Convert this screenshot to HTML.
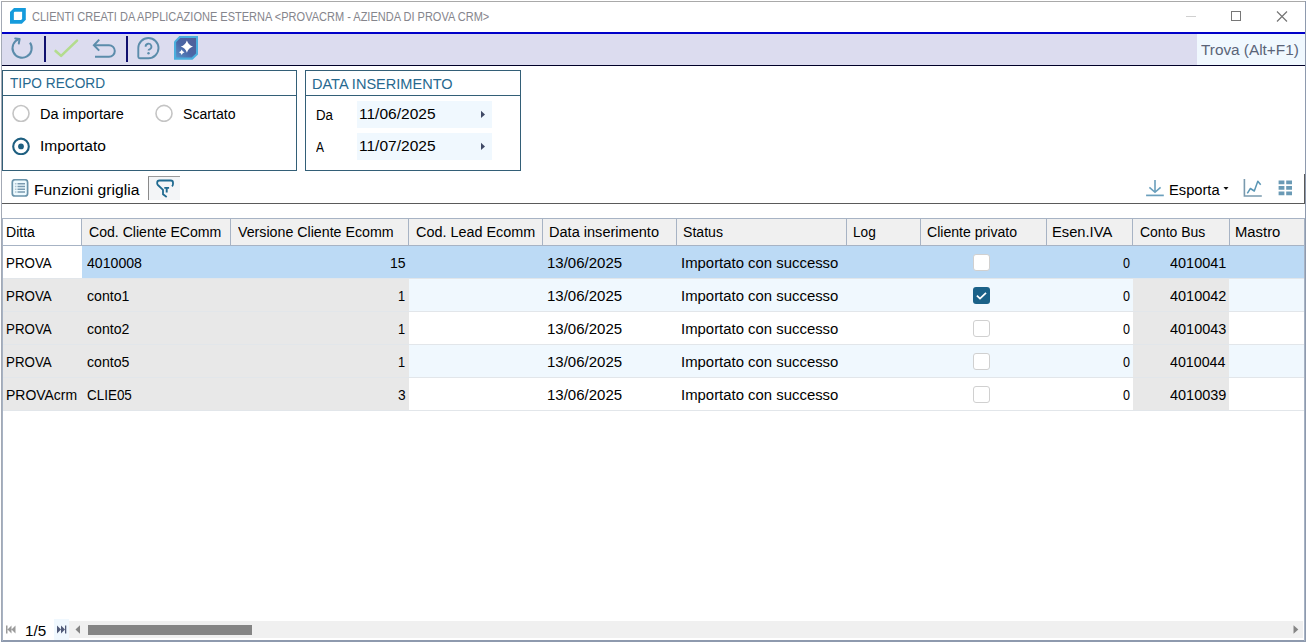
<!DOCTYPE html>
<html><head><meta charset="utf-8">
<style>
*{margin:0;padding:0;box-sizing:border-box}
html,body{width:1307px;height:642px;overflow:hidden;background:#fff;font-family:"Liberation Sans",sans-serif;color:#000}
.a{position:absolute}
.t{position:absolute;white-space:nowrap;line-height:1;transform-origin:0 0}
</style></head><body>
<!-- window border -->
<div class="a" style="left:1px;top:1px;width:1305px;height:1px;background:#a9a9a9"></div>
<div class="a" style="left:1px;top:1px;width:1px;height:641px;background:#a3a9b5"></div>
<div class="a" style="left:1305px;top:1px;width:1px;height:641px;background:#8e9aae"></div>
<div class="a" style="left:1px;top:640px;width:1305px;height:2px;background:#8e9aae"></div>

<!-- title bar -->
<svg class="a" style="left:10px;top:8px" width="17" height="17" viewBox="0 0 17 17">
  <path d="M4 0H15.8V11.7L11.8 15.7H0V4Z" fill="#159bdc"/>
  <path d="M5 3.85H12.1V10.9L11 12H3.85V5Q3.85 3.85 5 3.85Z" fill="#fff"/>
</svg>
<div class="a" style="left:1186px;top:16px;width:10px;height:1px;background:#d0d0d0"></div>
<div class="a" style="left:1231px;top:11px;width:10px;height:10px;border:1px solid #777"></div>
<svg class="a" style="left:1276px;top:11px" width="12" height="11" viewBox="0 0 12 11"><path d="M1 0.5L11 10.5M11 0.5L1 10.5" stroke="#747474" stroke-width="1.15"/></svg>

<!-- toolbar -->
<div class="a" style="left:2px;top:32px;width:1303px;height:2px;background:#0000c8"></div>
<div class="a" style="left:2px;top:34px;width:1303px;height:31px;background:#dcdcef"></div>
<div class="a" style="left:1197px;top:34px;width:108px;height:31px;background:#f0f8fe"></div>
<div class="a" style="left:2px;top:65px;width:1303px;height:1px;background:#000028"></div>
<svg class="a" style="left:10px;top:36px" width="26" height="26" viewBox="0 0 26 26">
  <path d="M20 6.6A9.6 9.6 0 1 1 8.7 3.1" fill="none" stroke="#5b8cab" stroke-width="2"/>
  <path d="M5.2 2.4L9.6 3L8.8 7.5" fill="none" stroke="#5b8cab" stroke-width="2" stroke-linejoin="round" stroke-linecap="round"/>
</svg>
<div class="a" style="left:44px;top:36px;width:2px;height:26px;background:#10106e"></div>
<svg class="a" style="left:50px;top:36px" width="32" height="26" viewBox="0 0 32 26">
  <path d="M5.6 15L11.1 19.9L27 4.6" fill="none" stroke="#b3dc8e" stroke-width="2.6" stroke-linecap="round" stroke-linejoin="round"/>
</svg>
<svg class="a" style="left:90px;top:36px" width="30" height="26" viewBox="0 0 30 26">
  <path d="M4 9.2H19A5.8 5.8 0 0 1 19 20.8H5" fill="none" stroke="#5b8cab" stroke-width="2"/>
  <path d="M9.2 3.6L3.9 9.2L9.2 14.6" fill="none" stroke="#5b8cab" stroke-width="2"/>
</svg>
<div class="a" style="left:126px;top:36px;width:2px;height:26px;background:#10106e"></div>
<svg class="a" style="left:134px;top:34px" width="30" height="30" viewBox="0 0 30 30">
  <path d="M4.3 14.1A10.1 10.1 0 1 1 14.4 24.2H5.8Q4.3 24.2 4.3 22.7Z" fill="none" stroke="#5b8cab" stroke-width="1.9"/>
  <path d="M11.6 12.7A2.9 2.9 0 1 1 15.6 15.3C14.8 15.6 14.5 16 14.5 16.6" fill="none" stroke="#5b8cab" stroke-width="1.8"/>
  <circle cx="14.5" cy="19.2" r="1.2" fill="#5b8cab"/>
</svg>
<svg class="a" style="left:174px;top:36px" width="24" height="24" viewBox="0 0 24 24">
  <defs><linearGradient id="g1" x1="0" y1="1" x2="1" y2="0"><stop offset="0" stop-color="#5a92c8"/><stop offset="0.45" stop-color="#4a66a6"/><stop offset="1" stop-color="#535e96"/></linearGradient></defs>
  <path d="M5.4 0H24.1V18.3L18.5 23.7H0V5.5Z" fill="#4aaedd"/>
  <path d="M6.2 2H22V17.5L17.6 21.6H2.1V6.3Z" fill="url(#g1)"/>
  <path d="M12.9 4.5Q14.4 9.1 19 10.6Q14.4 12.1 12.9 16.7Q11.4 12.1 6.8 10.6Q11.4 9.1 12.9 4.5Z" fill="#fff"/>
  <path d="M7.7 13.4Q8.4 15.5 10.5 16.2Q8.4 16.9 7.7 19Q7 16.9 4.9 16.2Q7 15.5 7.7 13.4Z" fill="#fff"/>
</svg>

<!-- TIPO RECORD box -->
<div class="a" style="left:2px;top:70px;width:295px;height:101px;border:1px solid #335f77"></div>
<div class="a" style="left:3px;top:95px;width:293px;height:1px;background:#335f77"></div>
<svg class="a" style="left:12px;top:104px" width="18" height="18" viewBox="0 0 18 18"><circle cx="9" cy="9.5" r="8" fill="#fff" stroke="#c4c4c4" stroke-width="1.6"/></svg>
<svg class="a" style="left:155px;top:104px" width="18" height="18" viewBox="0 0 18 18"><circle cx="9" cy="9.4" r="8" fill="#fff" stroke="#c4c4c4" stroke-width="1.6"/></svg>
<svg class="a" style="left:12px;top:137px" width="18" height="18" viewBox="0 0 18 18"><circle cx="9" cy="9.4" r="7.8" fill="#fff" stroke="#1e5f80" stroke-width="2.1"/><circle cx="9" cy="9.4" r="2.9" fill="#1e5f80"/></svg>

<!-- DATA box -->
<div class="a" style="left:305px;top:70px;width:216px;height:101px;border:1px solid #335f77"></div>
<div class="a" style="left:306px;top:95px;width:214px;height:1px;background:#335f77"></div>
<div class="a" style="left:357px;top:101px;width:135px;height:27px;background:#f0f8fe"></div>
<div class="a" style="left:357px;top:133px;width:135px;height:27px;background:#f0f8fe"></div>
<svg class="a" style="left:480px;top:110px" width="6" height="9" viewBox="0 0 6 9"><path d="M1 0.7L5 4.6L1 8.1Z" fill="#404a66"/></svg>
<svg class="a" style="left:480px;top:142px" width="6" height="9" viewBox="0 0 6 9"><path d="M1 0.7L5 4.6L1 8.1Z" fill="#404a66"/></svg>

<!-- grid toolbar -->
<svg class="a" style="left:11px;top:179px" width="18" height="18" viewBox="0 0 18 18">
  <rect x="1.3" y="0.7" width="15.3" height="16.3" rx="2.6" fill="#eefaff" stroke="#6a93aa" stroke-width="1.7"/>
  <path d="M6.5 4.8H14M6.5 7.6H14M6.5 10.3H14M6.5 13H14" stroke="#7a9ab0" stroke-width="1.5"/>
  <path d="M3.9 4.8H5.5M3.9 7.6H5.5M3.9 10.3H5.5M3.9 13H5.5" stroke="#b0c4d0" stroke-width="1.5"/>
</svg>
<div class="a" style="left:148px;top:176px;width:32px;height:24px;background:#f3f5f7;border-left:1px solid #8a8a8a;border-top:1px solid #9a9a9a"></div>
<svg class="a" style="left:148px;top:176px" width="32" height="24" viewBox="0 0 32 24">
  <path d="M24 10.3Q25 9.3 25 8V6.8Q25 4.5 22.8 4.5H11.5Q9.2 4.5 9.2 6.8V7.5Q9.2 8.3 9.9 9L15 13.8V18.3L18.7 20.9" fill="none" stroke="#1f6a90" stroke-width="1.8"/>
  <path d="M16.3 11.9H21.1M18.7 11.9V16.4" fill="none" stroke="#1f6a90" stroke-width="1.9"/>
</svg>
<div class="a" style="left:2px;top:203px;width:1303px;height:1px;background:#5a5a5a"></div>
<div class="a" style="left:1304px;top:174px;width:1px;height:30px;background:#5a5a5a"></div>
<svg class="a" style="left:1145px;top:179px" width="20" height="18" viewBox="0 0 20 18">
  <path d="M10 1.1V13.3M4.4 8.3L10 13.3L15.6 8.3" fill="none" stroke="#6a9fbc" stroke-width="1.6"/>
  <path d="M1.1 16.4H18.8" stroke="#6a9fbc" stroke-width="1.7"/>
</svg>
<svg class="a" style="left:1223px;top:186px" width="6" height="5" viewBox="0 0 6 5"><path d="M0.5 1H5.5L3 4Z" fill="#111"/></svg>
<svg class="a" style="left:1243px;top:178px" width="20" height="20" viewBox="0 0 20 20">
  <path d="M1.4 1V18H18.8" fill="none" stroke="#7a9aae" stroke-width="1.6"/>
  <path d="M4.3 15.3L7.4 10.5L11.3 13L14.8 3.2L17.7 6.8" fill="none" stroke="#5a96b5" stroke-width="1.5" stroke-linejoin="round"/>
</svg>
<svg class="a" style="left:1278px;top:180px" width="15" height="16" viewBox="0 0 15 16">
  <path d="M0.6 0.5h5.8v3.8h-5.8zM8.2 0.5h5.8v3.8h-5.8zM0.6 6h5.8v3.8h-5.8zM8.2 6h5.8v3.8h-5.8zM0.6 11.5h5.8v3.8h-5.8zM8.2 11.5h5.8v3.8h-5.8z" fill="#6a9ab5"/>
</svg>

<!-- grid -->
<div class="a" style="left:2px;top:218px;width:1303px;height:28px;background:#f0f0f0;border-top:1px solid #a7b3c4;border-bottom:1px solid #a7b3c4"></div>
<div class="a" style="left:2px;top:219px;width:80px;height:26px;background:#fff"></div>
<div class="a" style="left:2px;top:218px;width:1px;height:423px;background:#a7b3c4"></div>
<div class="a" style="left:1304px;top:218px;width:1px;height:423px;background:#a7b3c4"></div>
<!-- header separators -->
<div class="a" style="left:81px;top:219px;width:1px;height:26px;background:#a7b3c4"></div>
<div class="a" style="left:230px;top:219px;width:1px;height:26px;background:#a7b3c4"></div>
<div class="a" style="left:408px;top:219px;width:1px;height:26px;background:#a7b3c4"></div>
<div class="a" style="left:542px;top:219px;width:1px;height:26px;background:#a7b3c4"></div>
<div class="a" style="left:676px;top:219px;width:1px;height:26px;background:#a7b3c4"></div>
<div class="a" style="left:846px;top:219px;width:1px;height:26px;background:#a7b3c4"></div>
<div class="a" style="left:920px;top:219px;width:1px;height:26px;background:#a7b3c4"></div>
<div class="a" style="left:1046px;top:219px;width:1px;height:26px;background:#a7b3c4"></div>
<div class="a" style="left:1132px;top:219px;width:1px;height:26px;background:#a7b3c4"></div>
<div class="a" style="left:1229px;top:219px;width:1px;height:26px;background:#a7b3c4"></div>
<div class="a" style="left:1304px;top:219px;width:1px;height:26px;background:#a7b3c4"></div>

<!-- rows -->
<div class="a" style="left:82px;top:246px;width:1222px;height:32px;background:#bcdaf5"></div>
<div class="a" style="left:3px;top:278px;width:1301px;height:1px;background:#e2e6ea"></div>
<div class="a" style="left:409px;top:279px;width:895px;height:32px;background:#f0f8fe"></div>
<div class="a" style="left:3px;top:279px;width:406px;height:32px;background:#e8e8e8"></div>
<div class="a" style="left:3px;top:311px;width:1301px;height:1px;background:#e2e6ea"></div>
<div class="a" style="left:3px;top:312px;width:406px;height:32px;background:#e8e8e8"></div>
<div class="a" style="left:3px;top:344px;width:1301px;height:1px;background:#e2e6ea"></div>
<div class="a" style="left:409px;top:345px;width:895px;height:32px;background:#f0f8fe"></div>
<div class="a" style="left:3px;top:345px;width:406px;height:32px;background:#e8e8e8"></div>
<div class="a" style="left:3px;top:377px;width:1301px;height:1px;background:#e2e6ea"></div>
<div class="a" style="left:3px;top:378px;width:406px;height:32px;background:#e8e8e8"></div>
<div class="a" style="left:3px;top:410px;width:1301px;height:1px;background:#e2e6ea"></div>
<div class="a" style="left:1133px;top:279px;width:96px;height:32px;background:#e8e8e8"></div>
<div class="a" style="left:1133px;top:312px;width:96px;height:32px;background:#e8e8e8"></div>
<div class="a" style="left:1133px;top:345px;width:96px;height:32px;background:#e8e8e8"></div>
<div class="a" style="left:1133px;top:378px;width:96px;height:32px;background:#e8e8e8"></div>
<!-- checkboxes -->
<div class="a" style="left:973px;top:254px;width:17px;height:17px;border:1.7px solid #d0d0d0;border-radius:3px;background:#fff"></div>
<div class="a" style="left:973px;top:287px;width:17px;height:17px;border-radius:3px;background:#1a6188"></div>
<svg class="a" style="left:973px;top:287px" width="17" height="17" viewBox="0 0 17 17"><path d="M3.9 8.7L7 11.6L13 5.9" fill="none" stroke="#fff" stroke-width="1.8"/></svg>
<div class="a" style="left:973px;top:320px;width:17px;height:17px;border:1.7px solid #d0d0d0;border-radius:3px;background:#fff"></div>
<div class="a" style="left:973px;top:353px;width:17px;height:17px;border:1.7px solid #d0d0d0;border-radius:3px;background:#fff"></div>
<div class="a" style="left:973px;top:386px;width:17px;height:17px;border:1.7px solid #d0d0d0;border-radius:3px;background:#fff"></div>

<!-- footer -->
<svg class="a" style="left:6px;top:625px" width="10" height="9" viewBox="0 0 10 9"><path d="M0 0.5H1.5V8.5H0ZM5.5 0.5V8.5L1.5 4.5ZM9.5 0.5V8.5L5.5 4.5Z" fill="#9a9a9a"/></svg>
<div class="a" style="left:54px;top:619px;width:15px;height:21px;background:#f0f8fe"></div>
<svg class="a" style="left:57px;top:625px" width="10" height="9" viewBox="0 0 10 9"><path d="M0 0.5L4 4.5L0 8.5ZM4 0.5L8 4.5L4 8.5ZM8 0.5H9.3V8.5H8Z" fill="#505a78"/></svg>
<div class="a" style="left:69px;top:621px;width:1234px;height:17px;background:#f0f0f0"></div>
<svg class="a" style="left:75px;top:625px" width="6" height="9" viewBox="0 0 6 9"><path d="M5 0.3V8.7L0.5 4.5Z" fill="#858585"/></svg>
<div class="a" style="left:88px;top:625px;width:164px;height:10px;background:#858585"></div>
<svg class="a" style="left:1293px;top:625px" width="6" height="9" viewBox="0 0 6 9"><path d="M0.5 0.3V8.7L5.3 4.5Z" fill="#858585"/></svg>

<div class="t" style="left:31.70px;top:9.75px;font-size:13.4px;color:#85858c;transform:scaleX(0.8227)">CLIENTI CREATI DA APPLICAZIONE ESTERNA &lt;PROVACRM - AZIENDA DI PROVA CRM&gt;</div>
<div class="t" style="left:1200.50px;top:41.58px;font-size:15.5px;color:#5a6478;transform:scaleX(0.9889)">Trova (Alt+F1)</div>
<div class="t" style="left:9.50px;top:75.48px;font-size:15.5px;color:#27698f;transform:scaleX(0.8833)">TIPO RECORD</div>
<div class="t" style="left:39.76px;top:105.98px;font-size:15.5px;color:#000;transform:scaleX(0.9371)">Da importare</div>
<div class="t" style="left:183.40px;top:105.78px;font-size:15.5px;color:#000;transform:scaleX(0.9103)">Scartato</div>
<div class="t" style="left:39.69px;top:138.48px;font-size:15.5px;color:#000;transform:scaleX(1.0063)">Importato</div>
<div class="t" style="left:311.86px;top:75.88px;font-size:15.5px;color:#27698f;transform:scaleX(0.9383)">DATA INSERIMENTO</div>
<div class="t" style="left:315.54px;top:106.68px;font-size:15.5px;color:#000;transform:scaleX(0.8550)">Da</div>
<div class="t" style="left:316.40px;top:138.68px;font-size:15.5px;color:#000;transform:scaleX(0.7727)">A</div>
<div class="t" style="left:359.40px;top:106.38px;font-size:15.5px;color:#000;transform:scaleX(1.0013)">11/06/2025</div>
<div class="t" style="left:359.40px;top:138.18px;font-size:15.5px;color:#000;transform:scaleX(1.0013)">11/07/2025</div>
<div class="t" style="left:33.89px;top:181.68px;font-size:15.5px;color:#000;transform:scaleX(1.0106)">Funzioni griglia</div>
<div class="t" style="left:1169.05px;top:181.88px;font-size:15.5px;color:#000;transform:scaleX(0.9472)">Esporta</div>
<div class="t" style="left:6.39px;top:223.68px;font-size:15.5px;color:#000;transform:scaleX(0.9062)">Ditta</div>
<div class="t" style="left:88.50px;top:223.68px;font-size:15.5px;color:#000;transform:scaleX(0.9090)">Cod. Cliente EComm</div>
<div class="t" style="left:237.50px;top:223.68px;font-size:15.5px;color:#000;transform:scaleX(0.9172)">Versione Cliente Ecomm</div>
<div class="t" style="left:415.60px;top:223.68px;font-size:15.5px;color:#000;transform:scaleX(0.9289)">Cod. Lead Ecomm</div>
<div class="t" style="left:548.56px;top:223.68px;font-size:15.5px;color:#000;transform:scaleX(0.9388)">Data inserimento</div>
<div class="t" style="left:683.20px;top:223.68px;font-size:15.5px;color:#000;transform:scaleX(0.9091)">Status</div>
<div class="t" style="left:852.62px;top:223.68px;font-size:15.5px;color:#000;transform:scaleX(0.8800)">Log</div>
<div class="t" style="left:927.30px;top:223.68px;font-size:15.5px;color:#000;transform:scaleX(0.9091)">Cliente privato</div>
<div class="t" style="left:1052.45px;top:223.68px;font-size:15.5px;color:#000;transform:scaleX(0.9492)">Esen.IVA</div>
<div class="t" style="left:1139.60px;top:223.68px;font-size:15.5px;color:#000;transform:scaleX(0.9014)">Conto Bus</div>
<div class="t" style="left:1235.44px;top:223.68px;font-size:15.5px;color:#000;transform:scaleX(0.9565)">Mastro</div>
<div class="t" style="left:6.44px;top:254.88px;font-size:15.5px;color:#000;transform:scaleX(0.8604)">PROVA</div>
<div class="t" style="left:86.50px;top:254.88px;font-size:15.5px;color:#000;transform:scaleX(0.9100)">4010008</div>
<div class="t" style="left:390.09px;top:254.88px;font-size:15.5px;color:#000;transform:scaleX(0.9062)">15</div>
<div class="t" style="left:546.93px;top:254.88px;font-size:15.5px;color:#000;transform:scaleX(0.9688)">13/06/2025</div>
<div class="t" style="left:680.74px;top:254.88px;font-size:15.5px;color:#000;transform:scaleX(0.9613)">Importato con successo</div>
<div class="t" style="left:1123.00px;top:254.88px;font-size:15.5px;color:#000;transform:scaleX(0.8111)">0</div>
<div class="t" style="left:1170.40px;top:254.88px;font-size:15.5px;color:#000;transform:scaleX(0.9333)">4010041</div>
<div class="t" style="left:6.44px;top:287.88px;font-size:15.5px;color:#000;transform:scaleX(0.8604)">PROVA</div>
<div class="t" style="left:86.50px;top:287.88px;font-size:15.5px;color:#000;transform:scaleX(0.9106)">conto1</div>
<div class="t" style="left:398.07px;top:287.88px;font-size:15.5px;color:#000;transform:scaleX(0.8250)">1</div>
<div class="t" style="left:546.93px;top:287.88px;font-size:15.5px;color:#000;transform:scaleX(0.9688)">13/06/2025</div>
<div class="t" style="left:680.74px;top:287.88px;font-size:15.5px;color:#000;transform:scaleX(0.9613)">Importato con successo</div>
<div class="t" style="left:1123.00px;top:287.88px;font-size:15.5px;color:#000;transform:scaleX(0.8111)">0</div>
<div class="t" style="left:1170.40px;top:287.88px;font-size:15.5px;color:#000;transform:scaleX(0.9333)">4010042</div>
<div class="t" style="left:6.44px;top:320.88px;font-size:15.5px;color:#000;transform:scaleX(0.8604)">PROVA</div>
<div class="t" style="left:86.50px;top:320.88px;font-size:15.5px;color:#000;transform:scaleX(0.9106)">conto2</div>
<div class="t" style="left:398.07px;top:320.88px;font-size:15.5px;color:#000;transform:scaleX(0.8250)">1</div>
<div class="t" style="left:546.93px;top:320.88px;font-size:15.5px;color:#000;transform:scaleX(0.9688)">13/06/2025</div>
<div class="t" style="left:680.74px;top:320.88px;font-size:15.5px;color:#000;transform:scaleX(0.9613)">Importato con successo</div>
<div class="t" style="left:1123.00px;top:320.88px;font-size:15.5px;color:#000;transform:scaleX(0.8111)">0</div>
<div class="t" style="left:1170.40px;top:320.88px;font-size:15.5px;color:#000;transform:scaleX(0.9333)">4010043</div>
<div class="t" style="left:6.44px;top:353.88px;font-size:15.5px;color:#000;transform:scaleX(0.8604)">PROVA</div>
<div class="t" style="left:86.50px;top:353.88px;font-size:15.5px;color:#000;transform:scaleX(0.9106)">conto5</div>
<div class="t" style="left:398.07px;top:353.88px;font-size:15.5px;color:#000;transform:scaleX(0.8250)">1</div>
<div class="t" style="left:546.93px;top:353.88px;font-size:15.5px;color:#000;transform:scaleX(0.9688)">13/06/2025</div>
<div class="t" style="left:680.74px;top:353.88px;font-size:15.5px;color:#000;transform:scaleX(0.9613)">Importato con successo</div>
<div class="t" style="left:1123.00px;top:353.88px;font-size:15.5px;color:#000;transform:scaleX(0.8111)">0</div>
<div class="t" style="left:1170.40px;top:353.88px;font-size:15.5px;color:#000;transform:scaleX(0.9180)">4010044</div>
<div class="t" style="left:6.40px;top:386.88px;font-size:15.5px;color:#000;transform:scaleX(0.9013)">PROVAcrm</div>
<div class="t" style="left:86.50px;top:386.88px;font-size:15.5px;color:#000;transform:scaleX(0.8673)">CLIE05</div>
<div class="t" style="left:397.50px;top:386.88px;font-size:15.5px;color:#000;transform:scaleX(0.8889)">3</div>
<div class="t" style="left:546.93px;top:386.88px;font-size:15.5px;color:#000;transform:scaleX(0.9688)">13/06/2025</div>
<div class="t" style="left:680.74px;top:386.88px;font-size:15.5px;color:#000;transform:scaleX(0.9613)">Importato con successo</div>
<div class="t" style="left:1123.00px;top:386.88px;font-size:15.5px;color:#000;transform:scaleX(0.8111)">0</div>
<div class="t" style="left:1170.40px;top:386.88px;font-size:15.5px;color:#000;transform:scaleX(0.9333)">4010039</div>
<div class="t" style="left:24.98px;top:623.30px;font-size:15px;color:#000;transform:scaleX(1.0150)">1/5</div>
</body></html>
